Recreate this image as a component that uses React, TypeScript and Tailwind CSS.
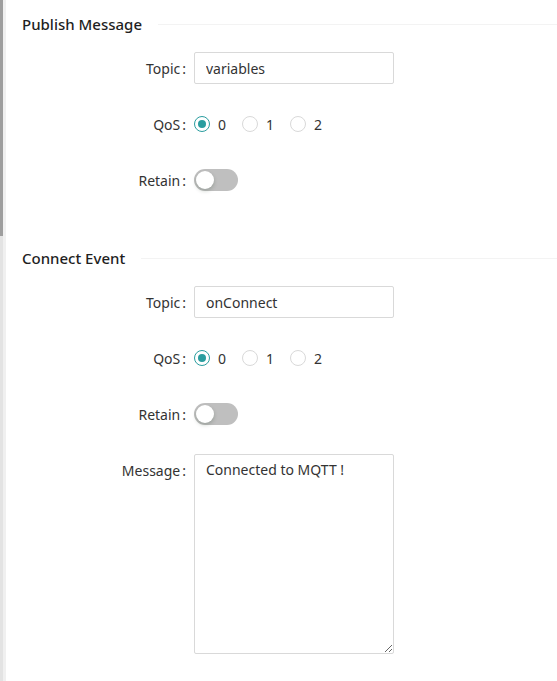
import { useState } from 'react'

function Label({ text }: { text: string }) {
  return (
    <div className="w-[164px] shrink-0 text-right text-[14px] text-[#333] pr-[2px]">
      {text}
      <span className="ml-[2px] mr-[-2px]">:</span>
    </div>
  )
}

function Radio({ value, checked, onClick }: { value: string; checked: boolean; onClick: () => void }) {
  return (
    <label className="flex items-center mr-[8px] cursor-pointer" onClick={onClick}>
      <span
        className={`w-[16px] h-[16px] rounded-full border flex items-center justify-center bg-white ${
          checked ? 'border-[#2a9d9f]' : 'border-[#d9d9d9]'
        }`}
      >
        {checked && <span className="w-[8px] h-[8px] rounded-full bg-[#2a9d9f]" />}
      </span>
      <span className="px-[8px] text-[14px] text-[#333]">{value}</span>
    </label>
  )
}

function QosRow() {
  const [qos, setQos] = useState('0')
  return (
    <div className="flex items-center h-[32px] mb-[24px]">
      <Label text="QoS" />
      <div className="ml-[8px] flex items-center">
        {['0', '1', '2'].map((v) => (
          <Radio key={v} value={v} checked={qos === v} onClick={() => setQos(v)} />
        ))}
      </div>
    </div>
  )
}

function RetainRow() {
  const [on, setOn] = useState(false)
  return (
    <div className="flex items-center h-[32px] mb-[24px]">
      <Label text="Retain" />
      <button
        onClick={() => setOn(!on)}
        className={`ml-[8px] w-[44px] h-[22px] rounded-full relative ${on ? 'bg-[#2a9d9f]' : 'bg-[#bfbfbf]'}`}
      >
        <span
          className={`absolute top-[2px] w-[18px] h-[18px] rounded-full bg-white shadow-[0_2px_4px_rgba(0,35,11,0.2)] ${
            on ? 'left-[24px]' : 'left-[2px]'
          }`}
        />
      </button>
    </div>
  )
}

function TopicRow({ value }: { value: string }) {
  return (
    <div className="flex items-center h-[32px] mb-[24px]">
      <Label text="Topic" />
      <input
        defaultValue={value}
        className="ml-[8px] w-[200px] h-[32px] px-[11px] border border-[#d9d9d9] rounded-[2px] text-[14px] text-[#333] outline-none"
      />
    </div>
  )
}

function Heading({ title }: { title: string }) {
  return (
    <div className="flex items-center h-[48px] mb-[4px]">
      <div className="text-[15px] font-medium text-[#1f1f1f] pr-[16px]">{title}</div>
      <div className="flex-1 h-px bg-[#f3f3f3]" />
    </div>
  )
}

export default function App() {
  return (
    <div className="flex w-[557px] h-[681px] bg-white overflow-hidden" style={{ fontFamily: '"Noto Sans", "Open Sans", sans-serif' }}>
      <div className="w-[3px] shrink-0 flex flex-col bg-[#e3e3e3]">
        <div className="h-[236px] bg-[#9e9e9e]" />
      </div>
      <div className="w-[3px] shrink-0 bg-[#f0f0f0]" />
      <div className="flex-1 pl-[16px]">
        <Heading title="Publish Message" />
        <TopicRow value="variables" />
        <QosRow />
        <RetainRow />

        <div className="mt-[38px]">
          <Heading title="Connect Event" />
          <TopicRow value="onConnect" />
          <QosRow />
          <RetainRow />
          <div className="flex items-start">
            <div className="pt-[6px]">
              <Label text="Message" />
            </div>
            <textarea
              defaultValue="Connected to MQTT !"
              className="ml-[8px] w-[200px] h-[200px] px-[11px] py-[4px] border border-[#d9d9d9] rounded-[2px] text-[14px] text-[#333] outline-none"
            />
          </div>
        </div>
      </div>
    </div>
  )
}
